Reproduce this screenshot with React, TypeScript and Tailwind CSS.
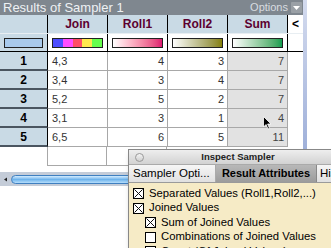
import React from 'react';

const FONT = { fontFamily: '"Liberation Sans", Arial, sans-serif' };

const ROWS = [
  { n: 1, join: '4,3', r1: 4, r2: 3, sum: 7 },
  { n: 2, join: '3,4', r1: 3, r2: 4, sum: 7 },
  { n: 3, join: '5,2', r1: 5, r2: 2, sum: 7 },
  { n: 4, join: '3,1', r1: 3, r2: 1, sum: 4 },
  { n: 5, join: '6,5', r1: 6, r2: 5, sum: 11 },
];

const HEADERS = ['Join', 'Roll1', 'Roll2', 'Sum'];

const CheckBox: React.FC<{ checked: boolean }> = ({ checked }) => (
  <span className="w-[11px] h-[11px] border border-black bg-white shrink-0 flex items-center justify-center">
    {checked && (
      <svg width="9" height="9" viewBox="0 0 9 9">
        <path d="M0.5 0.5L8.5 8.5M8.5 0.5L0.5 8.5" stroke="#111" strokeWidth="1" />
      </svg>
    )}
  </span>
);

const Swatch: React.FC<{ className: string }> = ({ className }) => (
  <div className={`h-[10px] border border-[#222] ${className}`} />
);

function ResultsTable() {
  return (
    <div className="w-[303px] flex flex-col">
      {/* title bar */}
      <div className="h-[15px] bg-[#7f878f] flex items-center pl-[3px] pr-[1px]">
        <span className="text-[13px] text-[#eef1f4] leading-none">Results of Sampler 1</span>
        <span className="ml-auto text-[11px] text-[#d8dce0] leading-none">Options</span>
        <span className="ml-[3px] w-[11px] h-[11px] bg-[#9aa0a6] rounded-[1px] flex items-center justify-center">
          <svg width="7" height="4" viewBox="0 0 7 4">
            <path d="M0 0H7L3.5 4Z" fill="#fff" />
          </svg>
        </span>
      </div>

      {/* header row */}
      <div className="flex h-[18px] bg-[#c9dae5]">
        <div className="w-[48px] border-r border-black" />
        {HEADERS.map(h => (
          <div
            key={h}
            className="w-[60px] border-r border-black flex items-center justify-center text-[12px] font-bold text-[#5c0030]"
          >
            {h}
          </div>
        ))}
        <div className="w-[15px] bg-white flex items-center pl-[4px] text-[12px] font-bold text-black">&lt;</div>
      </div>

      {/* swatch row */}
      <div className="flex h-[19px] border-t border-[#e8eef2] border-b border-b-black">
        <div className="w-[48px] bg-[#c9dae5] border-r border-black flex items-center px-[4px]">
          <Swatch className="w-full bg-[#a9caec]" />
        </div>
        <div className="w-[60px] bg-white border-r border-black flex items-center px-[4px]">
          <div className="w-full h-[10px] border border-[#222] flex">
            <div className="flex-1 bg-[#4d4dff]" />
            <div className="flex-1 bg-[#ff4dff]" />
            <div className="flex-1 bg-[#ff4d66]" />
            <div className="flex-1 bg-[#ffe94d]" />
            <div className="flex-1 bg-[#66ff4d]" />
          </div>
        </div>
        <div className="w-[60px] bg-white border-r border-black flex items-center px-[4px]">
          <Swatch className="w-full bg-gradient-to-r from-white to-[#dd1470]" />
        </div>
        <div className="w-[60px] bg-white border-r border-black flex items-center px-[4px]">
          <Swatch className="w-full bg-gradient-to-r from-white to-[#858000]" />
        </div>
        <div className="w-[60px] bg-white border-r border-black flex items-center px-[4px]">
          <Swatch className="w-full bg-gradient-to-r from-white to-[#0d9e50]" />
        </div>
        <div className="w-[15px] bg-white" />
      </div>

      {/* data rows */}
      {ROWS.map(r => (
        <div key={r.n} className="flex h-[19px] text-[11px]">
          <div className="w-[48px] bg-[#c9dae5] border-r border-black border-b-2 border-b-[#4a5560] flex items-center justify-center text-[12px] font-bold text-black">
            {r.n}
          </div>
          <div className="w-[60px] bg-white border-r border-b border-[#a8a8a8] flex items-center pl-[4px] text-[#333]">
            {r.join}
          </div>
          <div className="w-[60px] bg-white border-r border-b border-[#a8a8a8] flex items-center justify-end pr-[3px] text-[#333]">
            {r.r1}
          </div>
          <div className="w-[60px] bg-white border-r border-b border-[#a8a8a8] flex items-center justify-end pr-[3px] text-[#333]">
            {r.r2}
          </div>
          <div className="w-[60px] bg-[#e2e2e2] border-r border-b border-[#a8a8a8] flex items-center justify-end pr-[3px] text-[#444]">
            {r.sum}
          </div>
          <div className="w-[15px] bg-white" />
        </div>
      ))}

      {/* empty row */}
      <div className="flex h-[19px]">
        <div className="w-[48px]" />
        <div className="w-[60px] border-l border-r border-b border-[#a8a8a8] -ml-px" />
        <div className="w-[60px] border-r border-b border-[#a8a8a8]" />
      </div>

      {/* scroll bar */}
      <div className="mt-[6px] h-[14px] bg-[#c4ccd8] flex items-center pl-[3px]">
        <svg width="5" height="5" viewBox="0 0 5 5">
          <path d="M4 0.5V4.5L1 2.5Z" fill="#222" />
        </svg>
        <div className="ml-[3px] w-[200px] h-[9px] rounded-full border border-[#3f7fc0] bg-gradient-to-b from-[#d2ecff] via-[#6fb4ec] to-[#b6defc]" />
      </div>
    </div>
  );
}

function Inspector() {
  return (
    <div className="absolute left-[128px] top-[149px] w-[220px] h-[110px] border border-[#888] bg-[#f6ebc6] shadow-md" style={FONT}>
      <div className="relative h-[15px] bg-gradient-to-b from-[#eeeeee] to-[#d2d2d2] border-b border-[#aaa] flex items-center justify-center">
        <span className="absolute left-[6px] top-[3px] w-[9px] h-[9px] rounded-full border border-[#999] bg-gradient-to-b from-[#f4f4f4] to-[#cfcfcf]" />
        <span className="text-[9.5px] font-bold text-[#222] whitespace-nowrap">Inspect Sampler</span>
      </div>
      <div className="h-[18px] bg-[#ececec] border-b border-[#9a9a9a] flex text-black whitespace-nowrap">
        <div className="w-[87px] shrink-0 flex items-center pl-[4px] text-[11.5px] bg-gradient-to-b from-[#f6f6f6] to-[#e0e0e0] border-r border-[#aaa]">
          Sampler Opti...
        </div>
        <div className="w-[101px] shrink-0 flex items-center justify-center text-[11px] font-bold bg-gradient-to-b from-[#b8b8b8] to-[#9c9c9c] border-r border-[#888]">
          Result Attributes
        </div>
        <div className="shrink-0 flex items-center pl-[3px] text-[11.5px] bg-gradient-to-b from-[#f6f6f6] to-[#e0e0e0]">Histogram</div>
      </div>
      <div className="pt-[3px] pl-[4px] flex flex-col text-[11.3px] text-black leading-none whitespace-nowrap">
        <div className="h-[15px] flex items-center gap-[5px]">
          <CheckBox checked />
          <span>Separated Values (Roll1,Roll2,...)</span>
        </div>
        <div className="h-[14px] flex items-center gap-[5px]">
          <CheckBox checked />
          <span>Joined Values</span>
        </div>
        <div className="h-[15px] flex items-center gap-[5px] pl-[12px]">
          <CheckBox checked />
          <span>Sum of Joined Values</span>
        </div>
        <div className="h-[14px] flex items-center gap-[5px] pl-[12px]">
          <CheckBox checked={false} />
          <span>Combinations of Joined Values</span>
        </div>
        <div className="h-[15px] flex items-center gap-[5px] pl-[12px]">
          <CheckBox checked={false} />
          <span>Count (Of Joined Values)</span>
        </div>
      </div>
    </div>
  );
}

export default function App() {
  return (
    <div className="relative w-[331px] h-[248px] overflow-hidden bg-white" style={FONT}>
      <div className="flex">
        <ResultsTable />
        <div className="w-[4px] h-[186px] bg-gradient-to-b from-[#d4dbee] to-[#93a6d4]" />
      </div>
      {/* mouse cursor */}
      <svg className="absolute left-[263px] top-[116px]" width="9" height="14" viewBox="0 0 9 14">
        <path d="M0.5 0.5V11L3 8.5L5 13L6.5 12.3L4.6 8H8Z" fill="#000" stroke="#fff" strokeWidth="0.8" />
      </svg>
      <Inspector />
    </div>
  );
}
